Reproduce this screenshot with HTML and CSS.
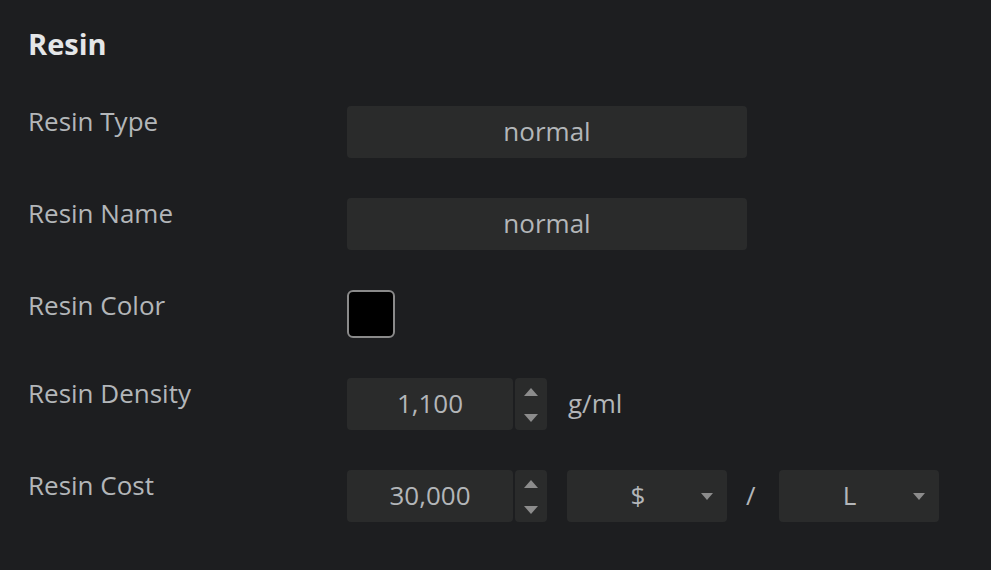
FILE: index.html
```html
<!DOCTYPE html>
<html lang="en">

<head>
  <meta charset="UTF-8" />
  <meta name="viewport" content="width=device-width, initial-scale=1.0" />
  <title>Resin Settings</title>
  <link rel="stylesheet" href="styles.css">
</head>

<body>
  <div class="panel">
    <div class="panel-title">Resin</div>

    <div class="form">
      <div class="row">
        <div class="label">Resin Type</div>
        <div class="text-field">normal</div>
      </div>

      <div class="row">
        <div class="label">Resin Name</div>
        <div class="text-field">normal</div>
      </div>

      <div class="row">
        <div class="label">Resin Color</div>
        <div class="swatch"></div>
      </div>

      <div class="row">
        <div class="label">Resin Density</div>
        <div class="controls">
          <div class="number-field">
            <div class="number-value">1,100</div>
            <div class="spinner">
              <span class="arrow up"></span>
              <span class="arrow down"></span>
            </div>
          </div>
          <div class="unit">g/ml</div>
        </div>
      </div>

      <div class="row">
        <div class="label">Resin Cost</div>
        <div class="controls">
          <div class="number-field">
            <div class="number-value">30,000</div>
            <div class="spinner">
              <span class="arrow up"></span>
              <span class="arrow down"></span>
            </div>
          </div>
          <div class="select">
            <span class="select-value">$</span>
            <span class="caret"></span>
          </div>
          <div class="slash">/</div>
          <div class="select">
            <span class="select-value">L</span>
            <span class="caret"></span>
          </div>
        </div>
      </div>
    </div>
  </div>
</body>

</html>
```

FILE: styles.css
```css
body {
  font-family: 'Open Sans', 'Noto Sans', sans-serif;
  background-color: #1d1e20;
  color: #b3b6b9;
  margin: 0;
}

.panel {
  padding: 24px 28px;
}

.panel-title {
  font-size: 29px;
  font-weight: 700;
  color: #e4e6e8;
  line-height: 40px;
  margin-bottom: 42px;
}

.form {
  display: flex;
  flex-direction: column;
  gap: 40px;
}

.row {
  display: flex;
  align-items: flex-start;
}

.label {
  width: 319px;
  font-size: 26px;
  line-height: 32px;
  margin-top: -1px;
}

.text-field {
  width: 400px;
  height: 52px;
  background-color: #2a2b2b;
  border-radius: 4px;
  display: flex;
  align-items: center;
  justify-content: center;
  font-size: 26px;
  padding-bottom: 2px;
  box-sizing: border-box;
}

.swatch {
  width: 48px;
  height: 48px;
  box-sizing: border-box;
  background-color: #000;
  border: 2px solid #8a8a8a;
  border-radius: 6px;
}

.controls {
  display: flex;
  align-items: center;
}

.number-field {
  display: flex;
  gap: 2px;
}

.number-value {
  width: 166px;
  height: 52px;
  background-color: #2a2b2b;
  border-radius: 4px;
  display: flex;
  align-items: center;
  justify-content: center;
  font-size: 26px;
  padding-bottom: 2px;
  box-sizing: border-box;
}

.spinner {
  width: 32px;
  height: 52px;
  background-color: #2a2b2b;
  border-radius: 4px;
  display: flex;
  flex-direction: column;
  align-items: center;
  justify-content: space-between;
  padding: 10px 0 8px;
  box-sizing: border-box;
}

.arrow {
  width: 0;
  height: 0;
  border-left: 7px solid transparent;
  border-right: 7px solid transparent;
}

.arrow.up {
  border-bottom: 8px solid #8c8c8c;
}

.arrow.down {
  border-top: 8px solid #8c8c8c;
}

.unit {
  font-size: 26px;
  margin-left: 21px;
  padding-bottom: 2px;
}

.select {
  width: 160px;
  height: 52px;
  background-color: #2a2b2b;
  border-radius: 4px;
  display: flex;
  align-items: center;
  padding: 0 14px 2px 0;
  box-sizing: border-box;
  margin-left: 20px;
}

.select-value {
  flex: 1;
  text-align: center;
  font-size: 26px;
  padding-left: 8px;
}

.caret {
  width: 0;
  height: 0;
  border-left: 6px solid transparent;
  border-right: 6px solid transparent;
  border-top: 7px solid #8c8c8c;
  margin-top: 2px;
}

.slash {
  font-size: 26px;
  margin-left: 19px;
  margin-right: 3px;
  padding-bottom: 2px;
}
```
